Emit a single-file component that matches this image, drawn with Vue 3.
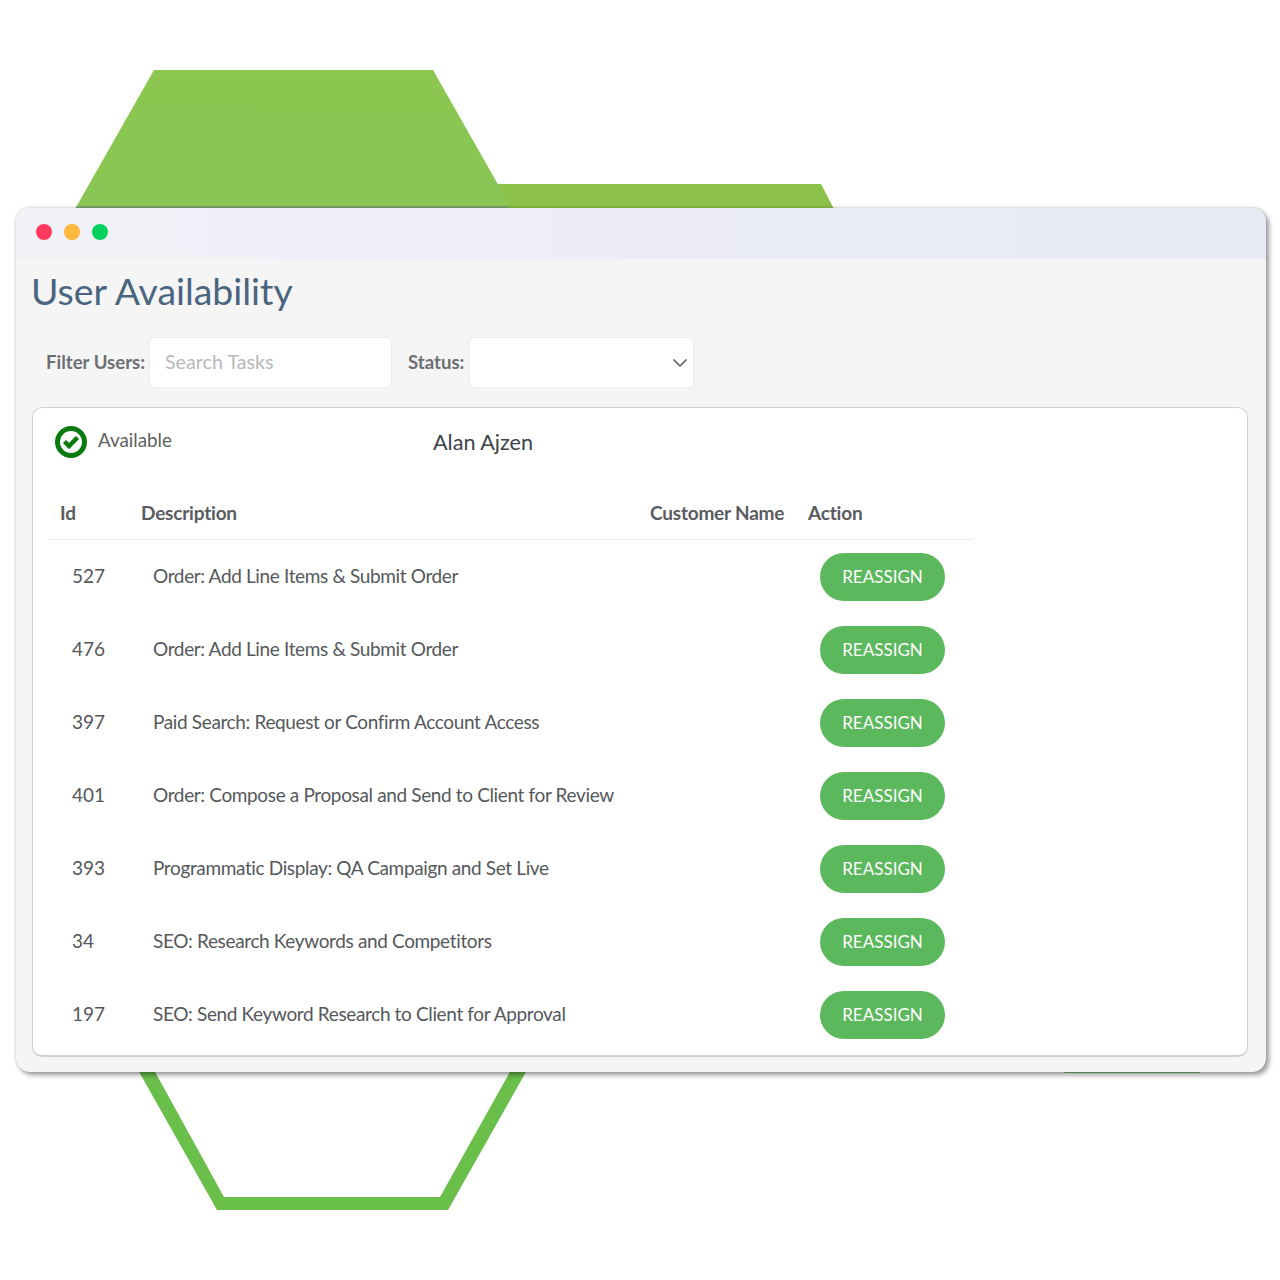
<script setup>
const rows = [
  { id: 527, text: 'Order: Add Line Items & Submit Order' },
  { id: 476, text: 'Order: Add Line Items & Submit Order' },
  { id: 397, text: 'Paid Search: Request or Confirm Account Access' },
  { id: 401, text: 'Order: Compose a Proposal and Send to Client for Review' },
  { id: 393, text: 'Programmatic Display: QA Campaign and Set Live' },
  { id: 34, text: 'SEO: Research Keywords and Competitors' },
  { id: 197, text: 'SEO: Send Keyword Research to Client for Approval' },
]
</script>

<template>
  <div class="stage">
    <svg class="deco" width="1280" height="1280" viewBox="0 0 1280 1280" aria-hidden="true">
      <defs>
        <linearGradient id="top-left" x1="0" y1="0" x2="0" y2="1">
          <stop offset="0" stop-color="#8cc750" />
          <stop offset="1" stop-color="#88c555" />
        </linearGradient>
      </defs>
      <polygon points="495,184 821,184 834,209 490,209" fill="#8dc24a" />
      <polygon points="154,70 433,70 512,209 75,209" fill="url(#top-left)" />
      <rect x="76" y="206" width="434" height="2" fill="#7fa868" />
      <polygon points="138,1070 154,1070 224,1197 440,1197 511,1070 527,1070 448,1210 217,1210" fill="#6abf4b" />
      <rect x="1064" y="1072" width="136" height="1" fill="#7ccf70" />
    </svg>

    <main class="window">
      <header class="titlebar">
        <span class="dot red"></span>
        <span class="dot amber"></span>
        <span class="dot green"></span>
      </header>

      <div class="content">
        <h1 class="title">User Availability</h1>

        <div class="filters">
          <label class="filter-label first">Filter Users:</label>
          <div class="field search">Search Tasks</div>
          <label class="filter-label second">Status:</label>
          <div class="field select">
            <svg width="16" height="10" viewBox="0 0 16 10" aria-hidden="true">
              <polyline points="1.5,1.5 8,8 14.5,1.5" fill="none" stroke="#555" stroke-width="1.5" />
            </svg>
          </div>
        </div>

        <section class="panel">
          <div class="user-row">
            <svg class="status-icon" width="32" height="32" viewBox="0 0 32 32" aria-hidden="true">
              <circle cx="16" cy="16" r="13.5" fill="#fff" stroke="#0a7a0e" stroke-width="5" />
              <polyline points="9.5,15.5 14,20 22.5,11.5" fill="none" stroke="#0a7a0e" stroke-width="4.5" />
            </svg>
            <span class="status-text">Available</span>
            <span class="user-name">Alan Ajzen</span>
          </div>

          <table class="tasks">
            <colgroup>
              <col class="c-id" />
              <col class="c-desc" />
              <col class="c-cust" />
              <col class="c-act" />
            </colgroup>
            <thead>
              <tr>
                <th>Id</th>
                <th>Description</th>
                <th>Customer Name</th>
                <th>Action</th>
              </tr>
            </thead>
            <tbody>
              <tr v-for="row in rows" :key="row.id + row.text">
                <td>{{ row.id }}</td>
                <td class="desc">{{ row.text }}</td>
                <td></td>
                <td><button class="reassign" type="button">REASSIGN</button></td>
              </tr>
            </tbody>
          </table>
        </section>
      </div>
    </main>
  </div>
</template>

<style scoped>
.stage {
  position: relative;
  width: 1280px;
  height: 1280px;
  box-sizing: border-box;
  padding: 208px 14px 0 16px;
  background: #fff;
  font-family: Lato, "Liberation Sans", sans-serif;
  overflow: hidden;
}
.deco {
  position: absolute;
  left: 0;
  top: 0;
}
.window {
  position: relative;
  height: 864px;
  border-radius: 14px;
  background: #f5f5f5;
  box-shadow: 3px 3px 5px rgba(0, 0, 0, 0.4), 0 -1px 3px rgba(0, 0, 0, 0.1), -1px 0 3px rgba(0, 0, 0, 0.08);
}
.titlebar {
  display: flex;
  align-items: center;
  gap: 12px;
  height: 51px;
  box-sizing: border-box;
  padding: 0 0 3px 20px;
  border-radius: 14px 14px 0 0;
  background: linear-gradient(90deg, #f1f2f7 0%, #ecedf6 50%, #e7eaf3 100%);
}
.dot {
  width: 16px;
  height: 16px;
  border-radius: 50%;
}
.red { background: #ff3a5c; }
.amber { background: #ffb83a; }
.green { background: #00d15c; }
.content {
  padding: 0 18px 0 16px;
}
.title {
  margin: 10px 0 0 -1px;
  font-size: 37.4px;
  line-height: 44px;
  font-weight: 400;
  color: #4a6580;
}
.filters {
  display: flex;
  align-items: center;
  margin-top: 24px;
  height: 51px;
}
.filter-label {
  font-size: 18.6px;
  font-weight: 700;
  color: #6d6f72;
  position: relative;
  top: -1px;
}
.filter-label.first { margin-left: 14px; width: 103px; }
.filter-label.second { margin-left: 16px; width: 61px; }
.field {
  height: 51px;
  box-sizing: border-box;
  border: 1px solid #ebebeb;
  border-radius: 6px;
  background: #fff;
}
.search {
  width: 243px;
  padding-left: 15px;
  font-size: 19.7px;
  line-height: 48px;
  color: #b6b8ba;
}
.select {
  width: 225px;
  display: flex;
  align-items: center;
  justify-content: flex-end;
  padding-right: 5px;
}
.panel {
  margin-top: 19px;
  height: 650px;
  box-sizing: border-box;
  border: 1px solid #cfcfcf;
  border-bottom-width: 2px;
  border-radius: 10px;
  background: #fff;
  padding: 0 0 0 15px;
}
.user-row {
  display: flex;
  align-items: center;
  height: 67px;
}
.status-icon {
  margin-left: 7px;
}
.status-text {
  margin-left: 11px;
  width: 335px;
  font-size: 18.8px;
  color: #5d5f62;
  position: relative;
  top: -2px;
}
.user-name {
  font-size: 21.6px;
  color: #3d4248;
}
.tasks {
  width: 925px;
  table-layout: fixed;
  border-collapse: collapse;
}
.c-id { width: 81px; }
.c-desc { width: 509px; }
.c-cust { width: 158px; }
.c-act { width: 177px; }
th {
  height: 64px;
  padding: 11px 0 0 12px;
  box-sizing: border-box;
  border-bottom: 1px solid #ececec;
  text-align: left;
  font-size: 19px;
  font-weight: 700;
  color: #5a5c5f;
  letter-spacing: -0.2px;
  white-space: nowrap;
}
td {
  height: 73px;
  padding: 0 0 0 24px;
  box-sizing: border-box;
  font-size: 19px;
  color: #55585b;
  white-space: nowrap;
}
td.desc {
  letter-spacing: -0.36px;
}
.reassign {
  display: block;
  width: 125px;
  height: 48px;
  margin-top: 2px;
  padding: 0;
  border: 0;
  border-radius: 24px;
  background: #5cb85c;
  color: #fff;
  font-family: inherit;
  font-size: 17px;
}
</style>
